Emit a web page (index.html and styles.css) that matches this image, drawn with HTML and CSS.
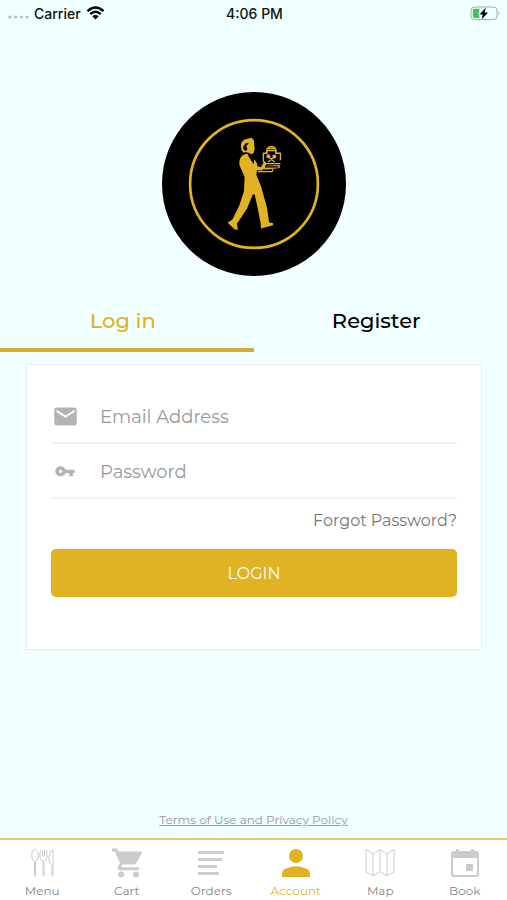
FILE: index.html
```html
<!DOCTYPE html>
<html lang="en">
<head>
    <meta charset="UTF-8">
    <meta name="viewport" content="width=device-width, initial-scale=1.0">
    <title>Account</title>
    <link rel="stylesheet" href="styles.css">
</head>
<body>

    <header class="statusbar">
        <div class="carrier">
            <svg class="signal" viewBox="0 0 22 4"><circle cx="2" cy="2" r="1.7"/><circle cx="8" cy="2" r="1.7"/><circle cx="14" cy="2" r="1.7"/><circle cx="20" cy="2" r="1.7"/></svg>
            <span>Carrier</span>
            <svg class="wifi" viewBox="0 0 18 14">
                <path d="M1 5.2Q9-2.4 17 5.2M3.8 8.2Q9 3.3 14.2 8.2"/>
                <path class="dot" d="M5.8 10.3Q9 7.6 12.2 10.3L9 13.6Z"/>
            </svg>
        </div>
        <span class="time">4:06 PM</span>
        <div class="battery">
            <svg viewBox="0 0 31 15">
                <rect class="shell" x="1" y="1" width="26" height="12.6" rx="3.6"/>
                <path class="tip" d="M28.5 5Q30.5 7.3 28.5 9.6Z"/>
                <path class="charge" d="M4.5 2.8H9.6L8.6 7.5L9.6 12H4.5Q2.8 12 2.8 10V5Q2.8 2.8 4.5 2.8Z"/>
                <path class="bolt" d="M15.8 1.5L9.6 8.4H12.8L11.6 13.5L18 6.4H14.6Z"/>
            </svg>
        </div>
    </header>

    <main>
        <svg class="logo" viewBox="22 22 550 550" role="img" aria-label="Waiter">
            <circle cx="297" cy="297" r="275"/>
            <circle class="ring" cx="297" cy="297" r="191"/>
            <!-- waiter -->
            <path class="gold" d="M264 210L277 206L284 220L296 238L298 222L306 236L307 244L321 248L323 257L306 256L304 269L318 304L336 368L342 411L354 414V420L318 430L317 416L310 379L299 328L293 329L276 371L246 416L249 434L240 433L218 413L233 402L253 361L267 319L269 277L254 242Q250 220 264 210Z"/>
            <path class="gold" d="M258 186Q256 166 277 162L290 159L297 167L298 182L299 192L296 204L290 208L276 202L266 203L260 197Z"/>
            <path class="ink" d="M266 184Q270 173 282 174L274 184L277 192L274 198L268 196L264 190Z"/>
            <path class="tie" d="M278 205L287 214L294 229"/>
            <!-- tray with the food cover -->
            <path class="gold" d="M318 247L328 228L336 236L330 243L374 240V249L338 254L316 253Z"/>
            <path class="tie" d="M330 246H370"/>
            <path class="line" d="M309 260H351L354 253M336 236H376M325 232V205H336V197H362V205H376V226M334 203Q335 185 349 185Q363 185 363 203M339 191H358M339 231L358 216M359 231L341 216"/>
            <circle class="gold" cx="340" cy="214" r="6"/>
            <circle class="gold" cx="358" cy="215" r="6"/>
        </svg>

        <div class="tabs">
            <button class="tab active" type="button">Log in</button>
            <button class="tab" type="button">Register</button>
        </div>

        <form class="card">
            <div class="field">
                <label for="email" aria-label="Email Address">
                    <svg viewBox="0 0 24 24"><path d="M20 4H4c-1.100 0-2 .9-2 2v12c0 1.100.9 2 2 2h16c1.100 0 2-.9 2-2V6c0-1.100-.9-2-2-2zm0 4l-8 5-8-5V6l8 5 8-5v2z"/></svg>
                </label>
                <input type="email" id="email" name="email" placeholder="Email Address">
            </div>
            <div class="field">
                <label for="password" aria-label="Password">
                    <svg viewBox="0 0 24 24"><path d="M12.650 10C11.830 7.670 9.610 6 7 6c-3.310 0-6 2.690-6 6s2.690 6 6 6c2.610 0 4.830-1.670 5.650-4H17v4h4v-4h2v-4H12.650zM7 14c-1.100 0-2-.9-2-2s.9-2 2-2 2 .9 2 2-.9 2-2 2z" transform="translate(2.200 3) scale(.78 .74)"/></svg>
                </label>
                <input type="password" id="password" name="password" placeholder="Password">
            </div>
            <a href="#" class="forgot">Forgot Password?</a>
            <button class="submit" type="submit">LOGIN</button>
        </form>
    </main>

    <a href="#" class="terms">Terms of Use and Privacy Policy</a>

    <nav class="navbar">
        <a href="#" class="nav-item">
            <svg class="thin" viewBox="0 0 32 32"><path d="M8.5 14.5C4.5 13 5 2.5 9 2.5S13.500 13 9.500 14.500V29H8.500ZM14.500 3Q12.500 13 17 14V29H18V14Q22.500 13 20.500 3M16.500 3V9H18.500V3M27 29V2.500Q23 5 23 12Q23 17 26 18V29Z"/></svg>
            <span>Menu</span>
        </a>
        <a href="#" class="nav-item">
            <svg viewBox="0 0 32 32"><path d="M1 1.500H6L7.500 4.500H30Q31.500 5 30.700 6.500L25.500 16Q24.700 17.500 23 17.500H11.500L10 20.300H28V23.200H9Q5.500 22.500 7 19.500L9 16L3.800 4.500H1Z"/><circle cx="10" cy="27.500" r="3"/><circle cx="25" cy="27.500" r="3"/></svg>
            <span>Cart</span>
        </a>
        <a href="#" class="nav-item">
            <svg viewBox="0 0 32 32"><path d="M3 4H29V7H3ZM3 11H27V14H3ZM3 18H22V21H3ZM3 25H24V28H3Z"/></svg>
            <span>Orders</span>
        </a>
        <a href="#" class="nav-item active">
            <svg viewBox="0 0 32 32"><circle cx="16" cy="9" r="7"/><path d="M2 30V26.500C2 21.500 10 19.500 16 19.500S30 21.500 30 26.500V30Z"/></svg>
            <span>Account</span>
        </a>
        <a href="#" class="nav-item">
            <svg class="thin" viewBox="0 0 32 32"><path d="M2 2.500L9 7L16 2.500L23 7L30 2.500V24.500L23 29L16 24.500L9 29L2 24.500ZM9 7V29M16 2.500V24.500M23 7V29"/></svg>
            <span>Map</span>
        </a>
        <a href="#" class="nav-item">
            <svg viewBox="0 0 32 32"><path fill-rule="evenodd" d="M7 2H10V4H22V2H25V4H27Q30 4 30 7V27Q30 30 27 30H5Q2 30 2 27V7Q2 4 5 4H7ZM4 11V26Q4 28 6 28H26Q28 28 28 26V11ZM17 17H24V24H17Z"/></svg>
            <span>Book</span>
        </a>
    </nav>

</body>
</html>
```
FILE: styles.css
```css
* {
  box-sizing: border-box;
}

body {
  margin: 0;
  min-height: 100vh;
  display: flex;
  flex-direction: column;
  background-color: #f0ffff;
  font-family: Montserrat, Inter, sans-serif;
}

a {
  text-decoration: none;
}

button {
  border: 0;
  cursor: pointer;
  font-family: inherit;
}

.statusbar {
  display: grid;
  grid-template-columns: 1fr auto 1fr;
  align-items: center;
  height: 26px;
  padding: 0 6px 0 8px;
  font-family: Inter, sans-serif;
  font-size: 14px;
  font-weight: 500;
  color: #111;
}

.carrier {
  display: flex;
  align-items: center;
  gap: 5px;
}

.signal {
  width: 21px;
  height: 4px;
  margin-top: 8px;
  fill: #b4bfbf;
}

.wifi {
  width: 19px;
  height: 14px;
  fill: none;
  stroke: #000;
  stroke-width: 2.4;
}

.wifi .dot {
  fill: #000;
  stroke: none;
}

.battery {
  display: flex;
  justify-content: flex-end;
}

.battery svg {
  width: 31px;
  height: 15px;
}

.shell {
  fill: none;
  stroke: #a3adad;
}

.tip {
  fill: #a3adad;
}

.charge {
  fill: #35c759;
}

.bolt {
  fill: #000;
}

main {
  flex: 1;
  display: flex;
  flex-direction: column;
  align-items: center;
}

.logo {
  width: 184px;
  height: 184px;
  margin-top: 66px;
}

.logo .gold {
  fill: #e0b224;
}

.logo .ring {
  fill: none;
  stroke: #e0b224;
  stroke-width: 8;
}

.logo .line {
  fill: none;
  stroke: #e0b224;
  stroke-width: 4;
}

.logo .tie {
  fill: none;
  stroke: #000;
  stroke-width: 4;
}

.tabs {
  display: flex;
  width: 100%;
  margin-top: 16px;
}

.tab {
  flex: 1;
  height: 60px;
  padding: 0 8px 0 0;
  background: none;
  border-bottom: 4px solid transparent;
  font-size: 21px;
  font-weight: 500;
  color: #000;
}

.tab.active {
  color: #e0b224;
  border-color: #d9ad24;
}

.card {
  align-self: stretch;
  display: flex;
  flex-direction: column;
  margin: 12px 25px 0 26px;
  padding: 24px 24px 52px;
  background-color: #fff;
  border: 1px solid #e9efef;
}

.field {
  display: flex;
  align-items: center;
  height: 55px;
  padding-top: 2px;
  border-bottom: 2px solid #f3f3f3;
}

.field label {
  display: flex;
  padding: 0 21px 0 1px;
}

.field svg {
  width: 27px;
  height: 27px;
  fill: #b3b3b3;
}

.field input {
  flex: 1;
  min-width: 0;
  padding: 0;
  border: 0;
  outline: 0;
  background: none;
  font-family: inherit;
  font-size: 18px;
  color: #555;
}

.field input::placeholder {
  color: #999;
}

.forgot {
  align-self: flex-end;
  margin: 12px 0 18px;
  font-size: 16px;
  line-height: 20px;
  color: #777;
}

.submit {
  height: 48px;
  background-color: #e0b224;
  border-radius: 5px;
  font-size: 16px;
  color: #fff;
}

.terms {
  align-self: center;
  margin-bottom: 10px;
  font-size: 12px;
  line-height: 16px;
  text-decoration: underline;
  color: #999;
}

.navbar {
  display: flex;
  height: 62px;
  background-color: #fff;
  border-top: 2px solid #e6cb6c;
}

.nav-item {
  flex: 1;
  display: flex;
  flex-direction: column;
  align-items: center;
  gap: 4px;
  padding-top: 7px;
  font-size: 12px;
  line-height: 16px;
  color: #858585;
}

.nav-item svg {
  width: 32px;
  height: 32px;
  fill: #ccc;
}

.nav-item .thin {
  fill: none;
  stroke: #ccc;
  stroke-width: 1;
}

.nav-item.active {
  color: #e0b224;
}

.nav-item.active svg {
  fill: #e0b224;
}
```
